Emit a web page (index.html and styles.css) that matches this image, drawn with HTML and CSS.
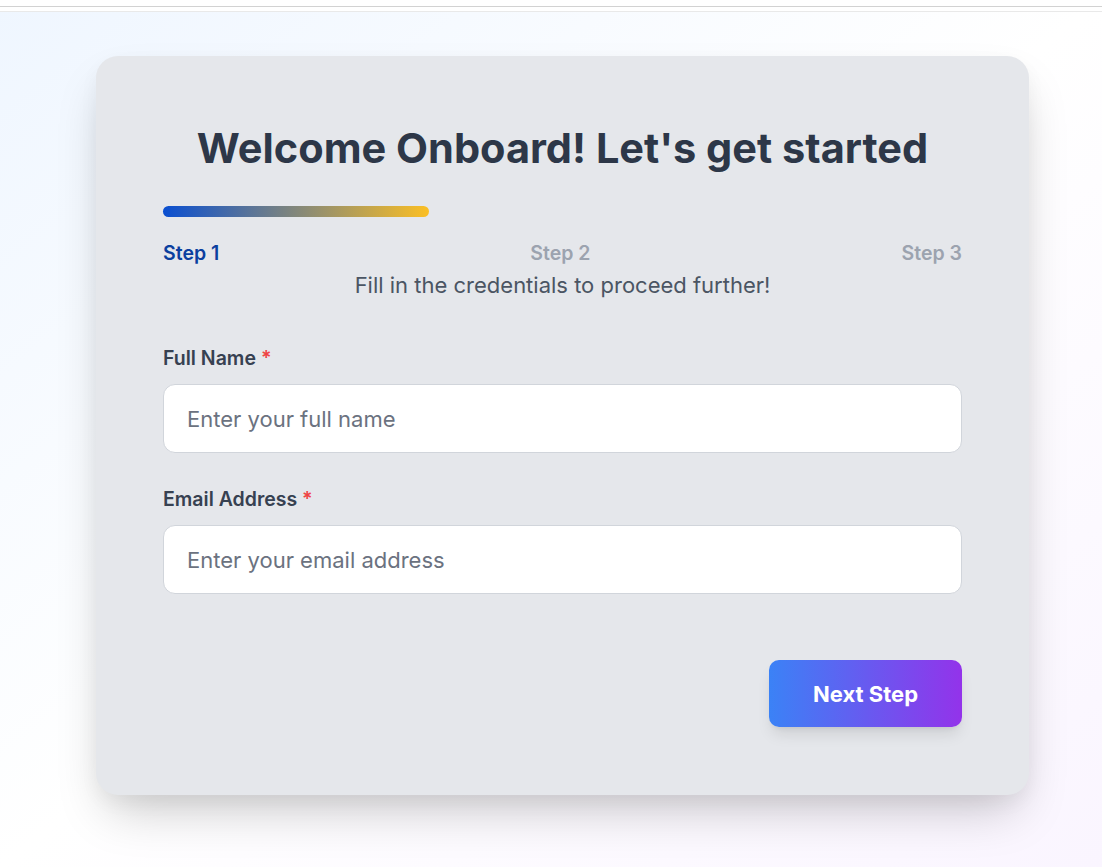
FILE: index.html
```html
<!DOCTYPE html>
<html lang="en">
<head>
<meta charset="utf-8">
<title>Onboarding</title>
<link rel="stylesheet" href="styles.css">
</head>
<body>
<div class="topbar"></div>
<main class="page">
  <section class="card">
    <h1 class="title">Welcome Onboard! Let's get started</h1>
    <div class="progress"><div class="progress-fill" style="width:33.33%"></div></div>
    <div class="steps">
      <span class="step active">Step 1</span>
      <span class="step">Step 2</span>
      <span class="step">Step 3</span>
    </div>
    <p class="subtitle">Fill in the credentials to proceed further!</p>
    <form class="form">
      <div class="field">
        <label class="label">Full Name <span class="req">*</span></label>
        <input class="input" type="text" placeholder="Enter your full name">
      </div>
      <div class="field">
        <label class="label">Email Address <span class="req">*</span></label>
        <input class="input" type="email" placeholder="Enter your email address">
      </div>
      <div class="actions">
        <button type="button" class="btn">Next Step</button>
      </div>
    </form>
  </section>
</main>
</body>
</html>
```
FILE: styles.css
```css
* { box-sizing: border-box; }
html, body { margin: 0; padding: 0; }
body {
  height: 867px;
  overflow: hidden;
  font-family: Inter, "Noto Sans", sans-serif;
  background: linear-gradient(to bottom right, #eff6ff 0%, #ffffff 50%, #faf5ff 100%);
}
.topbar {
  height: 12px;
  background: #fff;
  border-top: 6px solid #fff;
  border-bottom: 1px solid #e9e9e9;
  box-shadow: inset 0 1px 0 #d2d2d2;
}
.page {
  padding: 44px 0 0 96px;
}
.card {
  width: 933px;
  height: 739px;
  background: #e5e7eb;
  border-radius: 22px;
  padding: 66px 67px 0;
  box-shadow: 0 25px 50px -12px rgba(0,0,0,0.22), 0 8px 20px rgba(0,0,0,0.04);
}
.title {
  margin: 0;
  text-align: center;
  font-size: 41.5px;
  line-height: 52px;
  font-weight: 700;
  color: #2d3748;
}
.progress {
  margin-top: 32px;
  height: 11px;
  border-radius: 999px;
}
.progress-fill {
  height: 100%;
  border-radius: 999px;
  background: linear-gradient(90deg, #0a4fd1, #fbbf24);
}
.steps {
  display: flex;
  justify-content: space-between;
  margin-top: 24px;
  font-size: 19.5px;
  line-height: 24px;
  font-weight: 600;
}
.step { color: #9ca3af; }
.step.active { color: #0b3f9f; }
.subtitle {
  margin: 6px 0 0;
  text-align: center;
  font-size: 22px;
  line-height: 28px;
  color: #4b5563;
}
.form {
  margin-top: 47px;
  display: flex;
  flex-direction: column;
}
.field {
  display: flex;
  flex-direction: column;
  gap: 14px;
  margin-bottom: 34px;
}
.label {
  font-size: 19.5px;
  line-height: 24px;
  font-weight: 600;
  color: #374151;
}
.req { color: #ef4444; }
.input {
  height: 69px;
  width: 100%;
  padding: 0 23px;
  border: 1px solid #d1d5db;
  border-radius: 12px;
  background: #fff;
  font-family: inherit;
  font-size: 22px;
  color: #111827;
  outline: none;
}
.input::placeholder { color: #6b7280; }
.actions {
  display: flex;
  justify-content: flex-end;
  margin-top: 32px;
}
.btn {
  width: 193px;
  height: 67px;
  border: none;
  border-radius: 10px;
  background: linear-gradient(90deg, #3b82f6, #9333ea);
  color: #fff;
  font-family: inherit;
  font-size: 22px;
  font-weight: 700;
  box-shadow: 0 10px 15px -3px rgba(0,0,0,0.1), 0 4px 6px -4px rgba(0,0,0,0.1);
  cursor: pointer;
}
```
